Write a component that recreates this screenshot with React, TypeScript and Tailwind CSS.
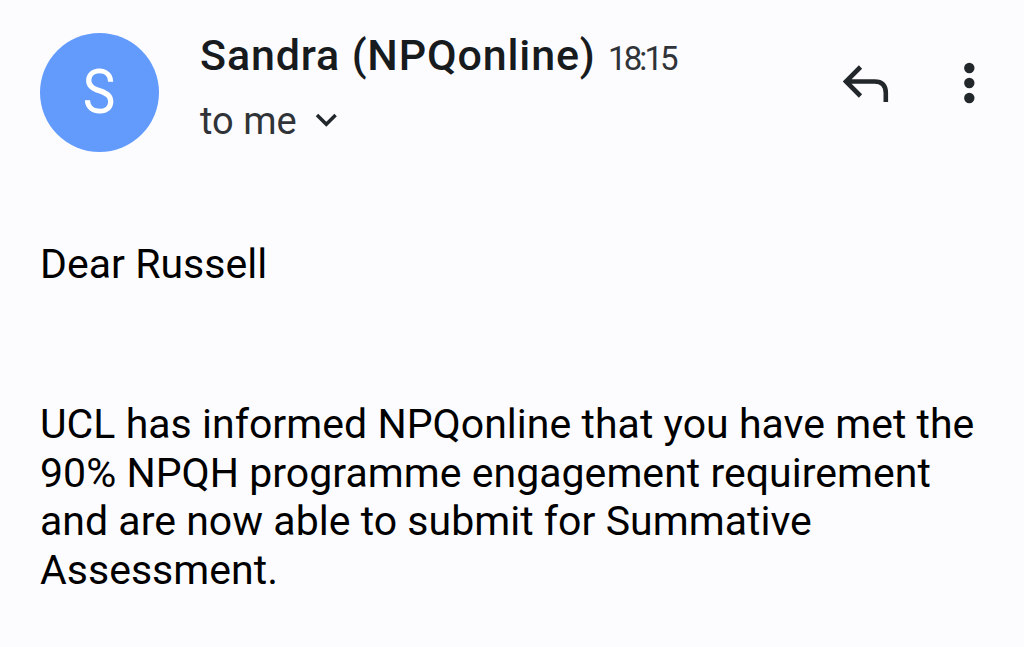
import { useState } from "react";

const message = {
  sender: "Sandra (NPQonline)",
  time: "18:15",
  recipient: "to me",
  greeting: "Dear Russell",
  lines: [
    "UCL has informed NPQonline that you have met the",
    "90% NPQH programme engagement requirement",
    "and are now able to submit for Summative",
    "Assessment.",
  ],
};

function Avatar({ name }: { name: string }) {
  return (
    <div className="flex h-[119px] w-[119px] shrink-0 items-center justify-center rounded-full bg-[#639bfd] text-[61px] leading-none text-white">
      <span className="scale-x-90">{name[0]}</span>
    </div>
  );
}

function ReplyIcon() {
  return (
    <svg width="46" height="38" viewBox="0 0 46 38" fill="none" stroke="#22272b" strokeWidth="4.6">
      <path d="M17.5 2 3 16.5 17.5 31M3 16.5H31.5Q42.8 16.5 42.8 28V37" />
    </svg>
  );
}

function MoreIcon() {
  return (
    <svg width="12" height="42" viewBox="0 0 12 42" fill="#22272b">
      <circle cx="6.3" cy="6" r="5.2" />
      <circle cx="6.3" cy="21" r="5.2" />
      <circle cx="6.3" cy="36" r="5.2" />
    </svg>
  );
}

export default function App() {
  const [showDetails, setShowDetails] = useState(false);

  return (
    <div className="h-[647px] w-[1024px] overflow-hidden bg-[#fcfcff] pl-10 pt-[33px] font-[Roboto,sans-serif]">
      <header className="flex h-[120px] items-start">
        <Avatar name={message.sender} />
        <div className="ml-[41px] w-[600px]">
          <div className="flex h-[45px] items-baseline whitespace-nowrap">
            <h1 className="w-[408px] text-[43px] font-medium leading-[45px] tracking-[0.85px] text-[#171b1e]">
              {message.sender}
            </h1>
            <span className="text-[33px] leading-none tracking-[-2.9px] text-[#303438]">
              {message.time}
            </span>
          </div>
          <button
            className="mt-[18px] flex h-[50px] items-center text-[38px] text-[#303438]"
            onClick={() => setShowDetails(!showDetails)}
          >
            <span className="w-[115px] text-left">{message.recipient}</span>
            <svg width="23" height="16" viewBox="0 0 23 16" fill="none" stroke="#22272b" strokeWidth="3.5">
              <path d="m2 2 9.3 9.3L20.6 2" />
            </svg>
          </button>
        </div>
        <button className="ml-[43px] mt-8" aria-label="Reply">
          <ReplyIcon />
        </button>
        <button className="ml-[74px] mt-[29px]" aria-label="More">
          <MoreIcon />
        </button>
      </header>

      <main className="whitespace-nowrap pt-[87px] text-[41px] leading-[48.4px] tracking-[0.03px] text-black">
        <p>{message.greeting}</p>
        <div className="mt-28">
          {message.lines.map((line) => (
            <p key={line}>{line}</p>
          ))}
        </div>
      </main>
    </div>
  );
}
